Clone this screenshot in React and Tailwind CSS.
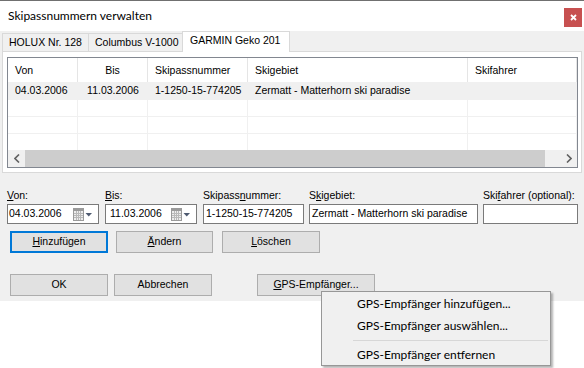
import React from "react";

const tabs = [
  { name: "HOLUX Nr. 128", w: "w-[87px]" },
  { name: "Columbus V-1000", w: "w-[96px]" },
];

const columns = [
  { name: "Von", w: "w-[70px]", align: "text-left" },
  { name: "Bis", w: "w-[70px]", align: "text-center" },
  { name: "Skipassnummer", w: "w-[100px]", align: "text-left" },
  { name: "Skigebiet", w: "w-[220px]", align: "text-left" },
  { name: "Skifahrer", w: "flex-1", align: "text-left" },
];

const row = ["04.03.2006", "11.03.2006", "1-1250-15-774205", "Zermatt - Matterhorn ski paradise", ""];

function Chevron({ left }) {
  return (
    <svg width="6" height="9" viewBox="0 0 6 9">
      <path
        d={left ? "M5 0.5 L1 4.5 L5 8.5" : "M1 0.5 L5 4.5 L1 8.5"}
        fill="none"
        stroke="#606060"
        strokeWidth="1.6"
      />
    </svg>
  );
}

function CalendarDrop() {
  return (
    <svg width="20" height="13" viewBox="0 0 20 13" className="shrink-0">
      <rect x="0.5" y="0.5" width="10" height="12" fill="#ededed" stroke="#9a9a9a" />
      <rect x="1" y="1" width="9" height="2" fill="#9a9a9a" />
      <path d="M1 5.5h9M1 7.5h9M1 9.5h9M3.5 3v9M5.5 3v9M7.5 3v9" stroke="#b9b9b9" strokeWidth="1" />
      <path d="M12.5 5h6.5l-3.25 3.5z" fill="#4e5a70" />
    </svg>
  );
}

function Label({ children }) {
  return <div className="h-[13px] leading-[13px] text-[10.5px] text-black whitespace-nowrap">{children}</div>;
}

function Btn({ children, w, focus }) {
  return (
    <div
      className={
        "h-[22px] flex items-center justify-center text-[10.5px] bg-[#e1e1e1] " +
        w +
        (focus ? " border-2 border-[#0078d7]" : " border border-[#adadad]")
      }
    >
      {children}
    </div>
  );
}

function App() {
  return (
    <div className="w-[584px] h-[368px] bg-white relative overflow-hidden font-['Liberation_Sans',Arial,sans-serif] text-black">
      {/* Titelleiste */}
      <div className="h-[31px] border-t border-[#707070] bg-white flex justify-between">
        <div className="pl-[8px] pt-[6px] text-[12px] font-['Lato',sans-serif]">Skipassnummern verwalten</div>
        <div className="mt-[7px] mr-[2px] w-[18px] h-[19px] bg-[#c75050] flex items-center justify-center">
          <svg width="7" height="7" viewBox="0 0 7 7">
            <path d="M1 1l5 5M6 1l-5 5" stroke="white" strokeWidth="1.8" />
          </svg>
        </div>
      </div>

      {/* Dialog */}
      <div className="h-[270px] bg-[#f0f0f0]">
        {/* Reiter */}
        <div className="h-[20px] flex items-end pl-[2px] text-[10.5px]">
          {tabs.map((t) => (
            <div
              key={t.name}
              className={t.w + " h-[18px] -mr-px border border-b-0 border-[#d9d9d9] bg-[#f0f0f0] flex items-center pl-[6px] whitespace-nowrap overflow-hidden"}
            >
              {t.name}
            </div>
          ))}
          <div className="relative z-10 w-[108px] h-[21px] -mb-px -ml-[1px] border border-b-0 border-[#d9d9d9] bg-white flex items-center pl-[7px] pb-[2px] whitespace-nowrap">
            GARMIN Geko 201
          </div>
        </div>

        <div className="ml-[2px] w-[580px] h-[122px] border border-[#d9d9d9] bg-white pl-[4px] pt-[5px]">
          {/* Liste */}
          <div className="w-[571px] h-[111px] border border-[#828790] bg-white flex flex-col text-[10.5px]">
            <div className="h-[24px] flex">
              {columns.map((c) => (
                <div key={c.name} className={c.w + " " + c.align + " border-r border-[#e5e5e5] px-[7px] leading-[24px]"}>
                  {c.name}
                </div>
              ))}
            </div>
            <div className="h-[17px] flex bg-[#f0f0f0]">
              {columns.map((c, i) => (
                <div key={c.name} className={c.w + " " + c.align + " px-[7px] leading-[17px] whitespace-nowrap"}>
                  {row[i]}
                </div>
              ))}
            </div>
            {[0, 1, 2].map((r) => (
              <div key={r} className="h-[17px] flex border-t border-[#f0f0f0]">
                {columns.map((c) => (
                  <div key={c.name} className={c.w + " border-r border-[#f0f0f0]"} />
                ))}
              </div>
            ))}
            <div className="h-[17px] flex bg-[#f0f0f0]">
              <div className="w-[17px] flex items-center justify-center">
                <Chevron left />
              </div>
              <div className="w-[520px] bg-[#cdcdcd]" />
              <div className="flex-1" />
              <div className="w-[17px] flex items-center justify-center">
                <Chevron />
              </div>
            </div>
          </div>
        </div>

        {/* Eingabefelder */}
        <div className="flex mt-[16px] text-[10.5px]">
          <div className="ml-[7px] w-[92px]">
            <Label>
              <u>V</u>on:
            </Label>
            <div className="mt-[2px] h-[20px] border border-[#7a7a7a] bg-white flex items-center pl-[1px] pr-[5px]">
              <span className="flex-1">04.03.2006</span>
              <CalendarDrop />
            </div>
          </div>
          <div className="ml-[6px] w-[92px]">
            <Label>
              <u>B</u>is:
            </Label>
            <div className="mt-[2px] h-[20px] border border-[#7a7a7a] bg-white flex items-center pl-[4px] pr-[5px]">
              <span className="flex-1">11.03.2006</span>
              <CalendarDrop />
            </div>
          </div>
          <div className="ml-[6px] w-[101px]">
            <Label>
              Skipass<u>n</u>ummer:
            </Label>
            <div className="mt-[2px] h-[20px] border border-[#7a7a7a] bg-white flex items-center pl-[2px]">
              1-1250-15-774205
            </div>
          </div>
          <div className="ml-[5px] w-[169px]">
            <Label>
              S<u>k</u>igebiet:
            </Label>
            <div className="mt-[2px] h-[20px] border border-[#7a7a7a] bg-white flex items-center pl-[2px] whitespace-nowrap overflow-hidden">
              Zermatt - Matterhorn ski paradise
            </div>
          </div>
          <div className="ml-[5px] w-[95px]">
            <Label>
              Ski<u>f</u>ahrer (optional):
            </Label>
            <div className="mt-[2px] h-[20px] border border-[#7a7a7a] bg-white" />
          </div>
        </div>

        {/* Schaltflächen */}
        <div className="flex mt-[7px] pl-[10px]">
          <Btn w="w-[98px]" focus>
            <u>H</u>inzufügen
          </Btn>
          <div className="ml-[8px]">
            <Btn w="w-[97px]">
              <u>Ä</u>ndern
            </Btn>
          </div>
          <div className="ml-[9px]">
            <Btn w="w-[98px]">
              <u>L</u>öschen
            </Btn>
          </div>
        </div>

        <div className="flex mt-[21px] pl-[10px]">
          <Btn w="w-[98px]">OK</Btn>
          <div className="ml-[6px]">
            <Btn w="w-[98px]">Abbrechen</Btn>
          </div>
          <div className="ml-[45px]">
            <Btn w="w-[118px]">
              <u>G</u>PS-Empfänger...
            </Btn>
          </div>
        </div>
      </div>

      {/* Kontextmenü */}
      <div className="absolute left-[321px] top-[291px] w-[230px] h-[75px] border border-[#979797] bg-[#f0f0f0] shadow-[2px_2px_2px_rgba(0,0,0,0.3)] pt-[1px] font-['Lato',sans-serif] text-[12px]">
        <div className="h-[22px] flex items-center pl-[35px]">GPS-Empfänger hinzufügen...</div>
        <div className="h-[22px] flex items-center pl-[35px]">GPS-Empfänger auswählen...</div>
        <div className="h-[7px] flex items-center pl-[31px] pr-[2px]">
          <div className="h-px w-full bg-[#d7d7d7]" />
        </div>
        <div className="h-[22px] flex items-center pl-[35px]">GPS-Empfänger entfernen</div>
      </div>
    </div>
  );
}

export default App;
